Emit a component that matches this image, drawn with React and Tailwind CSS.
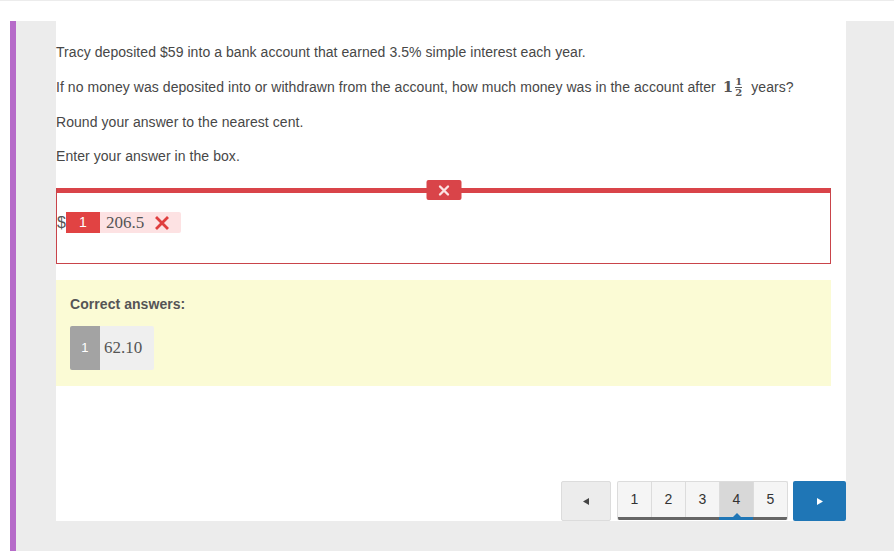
export default function App() {
  const pages = [1, 2, 3, 4, 5];
  return (
    <div className="flex h-[551px] w-[894px] flex-col bg-white font-['Liberation_Sans',Arial,sans-serif] text-[14px] tracking-[0.06px] text-[#474747]">
      <div className="h-[21px] shrink-0 border-t border-[#ececec]" />
      <div className="flex flex-1">
        <div className="w-[10px] bg-white" />
        <div className="w-[6px] bg-[#b66bc9]" />
        <div className="flex flex-1 bg-[#ececec] pb-[30px] pl-[40px] pr-[48px]">
          <div className="flex flex-1 flex-col bg-white">
            <div className="mr-[15px] pt-[21px]">
              <p className="leading-[20px]">Tracy deposited $59 into a bank account that earned 3.5% simple interest each year.</p>
              <p className="mt-[14px] flex items-center leading-[22px]">
                If no money was deposited into or withdrawn from the account, how much money was in the account after
                <span className="ml-[7px] flex items-center font-['DejaVu_Serif',serif] font-bold text-[#555]">
                  <span className="text-[15px]">1</span>
                  <span className="ml-[2px] flex flex-col items-center text-[10px] leading-[10px]">
                    <span>1</span>
                    <span className="h-px w-[7px] bg-[#555]" />
                    <span>2</span>
                  </span>
                </span>
                <span className="ml-[9px]">years?</span>
              </p>
              <p className="mt-[14px] leading-[20px]">Round your answer to the nearest cent.</p>
              <p className="mt-[14px] leading-[20px]">Enter your answer in the box.</p>

              <div className="relative mt-[22px] h-[76px] border border-t-0 border-[#c9444a]">
                <div className="h-[5px] bg-[#d94449]" />
                <div className="absolute left-1/2 top-[-8px] flex h-[20px] w-[35px] -translate-x-1/2 items-center justify-center rounded-[2px] bg-[#d94449]">
                  <svg width="11" height="11" viewBox="0 0 11 11">
                    <path d="M1.5 1.5 L9.5 9.5 M9.5 1.5 L1.5 9.5" stroke="#fbe3e3" strokeWidth="2.4" strokeLinecap="round" />
                  </svg>
                </div>
                <div className="mt-[19px] flex items-center">
                  <span className="text-[16px] leading-[21px] text-[#555]">$</span>
                  <span className="flex h-[21px] w-[34px] items-center justify-center bg-[#e14343] text-[14px] text-white">1</span>
                  <span className="flex h-[21px] w-[81px] items-center rounded-r-[2px] bg-[#fde2e3] pl-[6px]">
                    <span className="font-['Liberation_Serif',serif] text-[17px] tracking-normal text-[#555]">206.5</span>
                    <svg className="ml-[11px]" width="14" height="14" viewBox="0 0 14 14">
                      <path d="M2 2 L12 12 M12 2 L2 12" stroke="#df3e3e" strokeWidth="2.8" strokeLinecap="square" />
                    </svg>
                  </span>
                </div>
              </div>

              <div className="mt-[16px] h-[106px] bg-[#fbfbd5] pl-[14px] pt-[15px]">
                <div className="font-bold leading-[18px] text-[#555]">Correct answers:</div>
                <div className="mt-[13px] flex h-[44px] w-[84px] overflow-hidden rounded-[2px]">
                  <span className="flex w-[30px] items-center justify-center bg-[#a3a3a3] text-[13px] text-white">1</span>
                  <span className="flex flex-1 items-center bg-[#efefef] pl-[4px] font-['Liberation_Serif',serif] text-[17px] tracking-normal text-[#555]">62.10</span>
                </div>
              </div>
            </div>

            <div className="mt-auto flex items-start justify-end">
              <button className="flex h-[40px] w-[50px] items-center justify-center rounded-[2px] border border-[#dcdcdc] bg-[#ececec]">
                <svg width="6" height="7" viewBox="0 0 6 7"><path d="M0 3.5 L6 0 L6 7 Z" fill="#444" /></svg>
              </button>
              <div className="ml-[6px] flex flex-col overflow-hidden rounded-[2px] border-x border-t border-[#dcdcdc] bg-[#f5f5f5]">
                <div className="flex h-[35px]">
                  {pages.map((p) => (
                    <div
                      key={p}
                      className={
                        "relative flex items-center justify-center text-[14px] text-[#333] " +
                        (p > 1 ? "w-[34px] border-l border-[#dcdcdc] " : "w-[33px] ") +
                        (p === 4 ? "bg-[#d8d8d8]" : "")
                      }
                    >
                      {p}
                      {p === 4 && (
                        <span className="absolute bottom-0 left-1/2 h-0 w-0 -translate-x-1/2 border-x-[4px] border-b-[4px] border-x-transparent border-b-[#1f76b6]" />
                      )}
                    </div>
                  ))}
                </div>
                <div className="flex h-[3px] bg-[#666]">
                  <div className="w-[101px]" />
                  <div className="w-[34px] bg-[#1f76b6]" />
                </div>
              </div>
              <button className="ml-[5px] flex h-[40px] w-[53px] items-center justify-center rounded-[2px] bg-[#1f76b6]">
                <svg width="6" height="7" viewBox="0 0 6 7"><path d="M6 3.5 L0 0 L0 7 Z" fill="#fff" /></svg>
              </button>
            </div>
          </div>
        </div>
      </div>
    </div>
  );
}
